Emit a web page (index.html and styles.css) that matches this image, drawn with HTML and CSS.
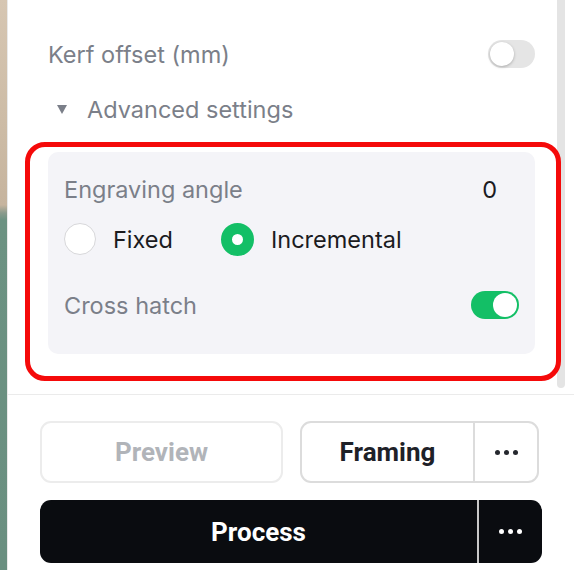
FILE: index.html
```html
<!DOCTYPE html>
<html>
<head>
<meta charset="utf-8">
<link rel="stylesheet" href="styles.css">
</head>
<body>
<div class="page">
  <div class="backdrop"></div>
  <div class="panel">
    <div class="scroll">
      <div class="content">
        <div class="row kerf">
          <span class="label">Kerf offset (mm)</span>
          <span class="toggle"><span class="knob"></span></span>
        </div>
        <div class="adv">
          <span class="tri"></span>
          <span class="label">Advanced settings</span>
        </div>
        <div class="card">
          <div class="row angle">
            <span class="label">Engraving angle</span>
            <span class="value">0</span>
          </div>
          <div class="radios">
            <span class="radio"><span class="dot"></span><span class="rtext">Fixed</span></span>
            <span class="radio checked"><span class="dot"></span><span class="rtext">Incremental</span></span>
          </div>
          <div class="row hatch">
            <span class="label">Cross hatch</span>
            <span class="toggle on"><span class="knob"></span></span>
          </div>
        </div>
        <div class="annot"></div>
      </div>
      <div class="scrollbar"></div>
    </div>
    <div class="footer">
      <div class="toprow">
        <button class="btn preview">Preview</button>
        <div class="split light">
          <button class="btn main">Framing</button>
          <button class="btn more"><span></span><span></span><span></span></button>
        </div>
      </div>
      <div class="split dark">
        <button class="btn main">Process</button>
        <button class="btn more"><span></span><span></span><span></span></button>
      </div>
    </div>
  </div>
</div>
</body>
</html>
```

FILE: styles.css
```css
* { box-sizing: border-box; }
html, body { margin: 0; padding: 0; background: #fff; }
body { font-family: Inter, "Noto Sans", sans-serif; width: 574px; height: 570px; overflow: hidden; }

.page { display: flex; height: 570px; }

.backdrop {
  width: 7px;
  flex: none;
  background: linear-gradient(to bottom, #d6c6b2 0px, #cdbca6 120px, #c6b49e 205px, #8a9a8c 213px, #6c9282 220px, #6a8f80 570px);
}

.panel {
  flex: 1;
  display: flex;
  flex-direction: column;
  background: #fff;
  border-left: 1px solid #e9e9e9;
}

.scroll {
  height: 394px;
  display: flex;
  flex: none;
}

.content {
  position: relative;
  flex: 1;
  padding: 40px 22px 0 40px;
}

.scrollbar {
  width: 8px;
  height: 388px;
  margin-right: 9px;
  background: #e4e4e4;
  border-radius: 0 0 4px 4px;
  flex: none;
}

.row {
  display: flex;
  align-items: center;
  justify-content: space-between;
}

.label {
  font-size: 23.5px;
  color: #7b7f89;
}

.kerf { height: 28px; }

.toggle {
  position: relative;
  width: 47px;
  height: 28px;
  border-radius: 14px;
  background: #e5e5e5;
  display: block;
}
.toggle .knob {
  position: absolute;
  top: 2px;
  left: 2px;
  width: 24px;
  height: 24px;
  border-radius: 50%;
  background: #fff;
  box-shadow: 0 1px 3px rgba(0,0,0,0.25);
}
.toggle.on { background: #13bf66; width: 48px; }
.toggle.on .knob { left: 22px; box-shadow: none; }

.adv {
  display: flex;
  align-items: center;
  height: 30px;
  margin-top: 26px;
  padding-left: 9px;
}
.tri {
  width: 0; height: 0;
  border-left: 5.5px solid transparent;
  border-right: 5.5px solid transparent;
  border-top: 9px solid #7b7f89;
  margin-right: 20px;
}

.card {
  margin-top: 28px;
  background: #f4f4f8;
  border-radius: 10px;
  height: 202px;
  padding: 22px 16px 0 16px;
}

.angle { height: 30px; }
.value { font-size: 23.5px; color: #1b1b1f; margin-right: 22px; }

.radios {
  display: flex;
  align-items: center;
  height: 34px;
  margin-top: 18px;
  gap: 48px;
}
.radio { display: flex; align-items: center; }
.radio .dot {
  width: 32px;
  height: 32px;
  border-radius: 50%;
  border: 1.5px solid #d7d7da;
  background: #fff;
  margin-right: 17px;
  flex: none;
}
.radio.checked .dot {
  width: 33px;
  height: 33px;
  border: 11.5px solid #13bf66;
  background: #fff;
}
.rtext { font-size: 23.5px; color: #1b1b1f; }

.hatch { height: 28px; margin-top: 35px; }

.annot {
  position: absolute;
  left: 17px;
  top: 142px;
  width: 536px;
  height: 239px;
  border: 5px solid #f50a0a;
  border-radius: 20px;
  pointer-events: none;
}

.footer {
  flex: 1;
  border-top: 1px solid #ebebeb;
  padding: 26px 32px 0 32px;
  display: flex;
  flex-direction: column;
  gap: 17px;
}

.toprow {
  display: grid;
  grid-template-columns: 243px 239px;
  gap: 17px;
  height: 62px;
}

.btn {
  font-family: Roboto, "Liberation Sans", sans-serif;
  font-weight: 700;
  font-size: 26px;
  border: none;
  background: none;
  padding: 0;
  margin: 0;
  cursor: pointer;
}

.preview {
  border: 2px solid #ececec;
  border-radius: 11px;
  color: #b1b4b9;
  background: #fff;
}

.split { display: flex; border-radius: 11px; overflow: hidden; }
.split .main { flex: 1; }
.split .more {
  width: 64px;
  flex: none;
  display: flex;
  align-items: center;
  justify-content: center;
  gap: 4px;
}
.split .more span { width: 5px; height: 5px; border-radius: 50%; display: block; }

.split.light { border: 2px solid #dcdcdc; }
.split.light .main { color: #1e2128; }
.split.light .more { border-left: 2px solid #dcdcdc; }
.split.light .more span { background: #25282e; }

.split.dark { background: #0a0c10; height: 63px; width: 502px; }
.split.dark .main { color: #fff; }
.split.dark .more { width: 65px; border-left: 2px solid #c9c9c9; }
.split.dark .more span { background: #fff; }
```
